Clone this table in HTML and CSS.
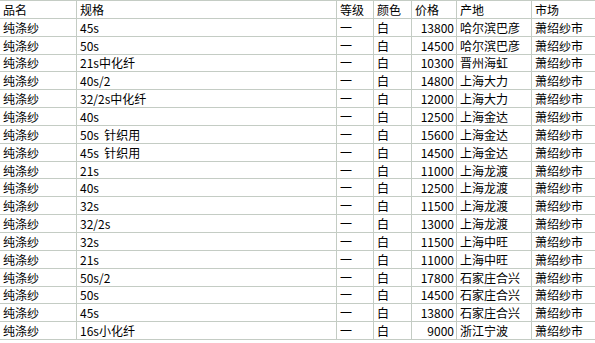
FILE: index.html
```html
<!DOCTYPE html>
<html lang="zh-CN">
<head>
<meta charset="utf-8">
<title>纯涤纱价格</title>
<link rel="stylesheet" href="styles.css">
</head>
<body>
<table class="sheet">
<colgroup>
<col class="c-name"><col class="c-spec"><col class="c-grade"><col class="c-color"><col class="c-price"><col class="c-origin"><col class="c-market">
</colgroup>
<thead>
<tr><th>品名</th><th>规格</th><th>等级</th><th>颜色</th><th>价格</th><th>产地</th><th>市场</th></tr>
</thead>
<tbody>
<tr><td>纯涤纱</td><td>45s</td><td>一</td><td>白</td><td class="num">13800</td><td>哈尔滨巴彦</td><td>萧绍纱市</td></tr>
<tr><td>纯涤纱</td><td>50s</td><td>一</td><td>白</td><td class="num">14500</td><td>哈尔滨巴彦</td><td>萧绍纱市</td></tr>
<tr><td>纯涤纱</td><td>21s中化纤</td><td>一</td><td>白</td><td class="num">10300</td><td>晋州海虹</td><td>萧绍纱市</td></tr>
<tr><td>纯涤纱</td><td>40s/2</td><td>一</td><td>白</td><td class="num">14800</td><td>上海大力</td><td>萧绍纱市</td></tr>
<tr><td>纯涤纱</td><td>32/2s中化纤</td><td>一</td><td>白</td><td class="num">12000</td><td>上海大力</td><td>萧绍纱市</td></tr>
<tr><td>纯涤纱</td><td>40s</td><td>一</td><td>白</td><td class="num">12500</td><td>上海金达</td><td>萧绍纱市</td></tr>
<tr><td>纯涤纱</td><td>50s&nbsp; 针织用</td><td>一</td><td>白</td><td class="num">15600</td><td>上海金达</td><td>萧绍纱市</td></tr>
<tr><td>纯涤纱</td><td>45s&nbsp; 针织用</td><td>一</td><td>白</td><td class="num">14500</td><td>上海金达</td><td>萧绍纱市</td></tr>
<tr><td>纯涤纱</td><td>21s</td><td>一</td><td>白</td><td class="num">11000</td><td>上海龙渡</td><td>萧绍纱市</td></tr>
<tr><td>纯涤纱</td><td>40s</td><td>一</td><td>白</td><td class="num">12500</td><td>上海龙渡</td><td>萧绍纱市</td></tr>
<tr><td>纯涤纱</td><td>32s</td><td>一</td><td>白</td><td class="num">11500</td><td>上海龙渡</td><td>萧绍纱市</td></tr>
<tr><td>纯涤纱</td><td>32/2s</td><td>一</td><td>白</td><td class="num">13000</td><td>上海龙渡</td><td>萧绍纱市</td></tr>
<tr><td>纯涤纱</td><td>32s</td><td>一</td><td>白</td><td class="num">11500</td><td>上海中旺</td><td>萧绍纱市</td></tr>
<tr><td>纯涤纱</td><td>21s</td><td>一</td><td>白</td><td class="num">11000</td><td>上海中旺</td><td>萧绍纱市</td></tr>
<tr><td>纯涤纱</td><td>50s/2</td><td>一</td><td>白</td><td class="num">17800</td><td>石家庄合兴</td><td>萧绍纱市</td></tr>
<tr><td>纯涤纱</td><td>50s</td><td>一</td><td>白</td><td class="num">14500</td><td>石家庄合兴</td><td>萧绍纱市</td></tr>
<tr><td>纯涤纱</td><td>45s</td><td>一</td><td>白</td><td class="num">13800</td><td>石家庄合兴</td><td>萧绍纱市</td></tr>
<tr><td>纯涤纱</td><td>16s小化纤</td><td>一</td><td>白</td><td class="num">9000</td><td>浙江宁波</td><td>萧绍纱市</td></tr>
</tbody>
</table>
</body>
</html>
```
FILE: styles.css
```css
html, body {
  margin: 0;
  padding: 0;
  background: #ffffff;
}
body {
  overflow: hidden;
}
.sheet {
  border-collapse: collapse;
  table-layout: fixed;
  width: 597px;
  margin: 0 0 0 -1px;
  font-family: "Noto Sans CJK SC", "Noto Sans", sans-serif;
  font-size: 12px;
  color: #000000;
}
.c-name { width: 77px; }
.c-spec { width: 260px; }
.c-grade { width: 37px; }
.c-color { width: 38px; }
.c-price { width: 45px; }
.c-origin { width: 75px; }
.c-market { width: 65px; }
.sheet tr {
  height: 17.85px;
}
.sheet th,
.sheet td {
  border: 1px solid #c4ccc4;
  padding: 0 2px 0 3px;
  line-height: 15px;
  text-align: left;
  font-weight: normal;
  white-space: nowrap;
  overflow: hidden;
  vertical-align: middle;
}
.sheet td.num {
  text-align: right;
  padding-right: 2px;
}
```
